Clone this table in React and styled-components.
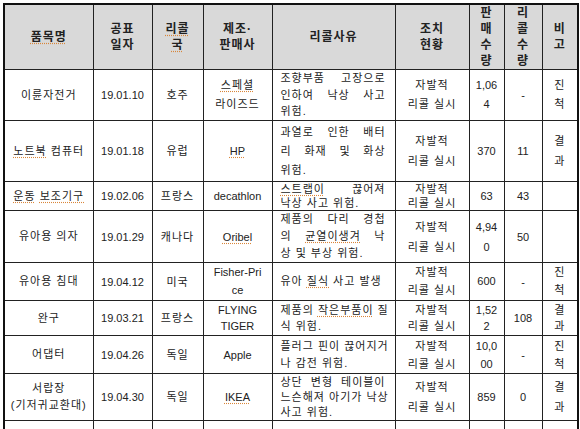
import React from "react";
import styled, { createGlobalStyle } from "styled-components";

const GlobalStyle = createGlobalStyle`
  html, body { margin: 0; padding: 0; background: #fff; }
  body { font-family: "Liberation Sans", "Noto Sans CJK KR", sans-serif; }
`;

const Page = styled.div`
  padding: 3px 0 0 3px;
  width: 580px;
  height: 429px;
  overflow: hidden;
  box-sizing: border-box;
`;

const Table = styled.table`
  border-collapse: collapse;
  table-layout: fixed;
  width: 574px;
  border: 2px solid #111;
  color: #222;
`;

const Head = styled.th`
  background: #d9d9d9;
  border: 1px solid #222;
  font-size: 12px;
  font-weight: bold;
  letter-spacing: 1px;
  line-height: 16px;
  text-align: center;
  padding: 0;
  height: 63px;
`;

const Cell = styled.td`
  border: 1px solid #222;
  font-size: 11px;
  letter-spacing: ${(p) => (p.$latin ? "0" : "1px")};
  line-height: ${(p) => p.$lh || 16}px;
  text-align: ${(p) => (p.$left ? "left" : "center")};
  padding: ${(p) => (p.$left ? "0 9px 0 8px" : "0")};
  height: ${(p) => p.$h}px;
  vertical-align: middle;
  white-space: nowrap;
  overflow: hidden;
`;

const Line = styled.span`
  display: block;
  text-align: ${(p) => (p.$full ? "justify" : "left")};
  text-align-last: ${(p) => (p.$full ? "justify" : "left")};
`;

const Mark = styled.span`
  text-decoration: underline dotted #d9863a;
  text-underline-offset: 2px;
`;

const cols = [89, 59, 51, 69, 123, 74, 35, 38, 36];

const split = (s) =>
  s.split("\n").map((t, i, a) => (
    <React.Fragment key={i}>
      {t}
      {i < a.length - 1 && <br />}
    </React.Fragment>
  ));

// h: row height, lh: line height of the reason text, lh2: line height of two-line cells
const rows = [
  {
    h: 50, lh: 16.5, lh2: 19,
    name: "이륜자전거", date: "19.01.10", nation: "호주",
    maker: <><Mark>스페셜</Mark><br />라이즈드</>, makerLatin: false,
    reason: [["조향부품 고장으로", 1], ["인하여 낙상 사고", 1], ["위험.", 0]],
    sold: "1,06\n4", recall: "-", note: "진\n척",
  },
  {
    h: 60, lh: 19, lh2: 20,
    name: <><Mark>노트북</Mark> 컴퓨터</>, date: "19.01.18", nation: "유럽",
    maker: <Mark>HP</Mark>, makerLatin: true,
    reason: [["과열로 인한 배터", 1], ["리 화재 및 화상", 1], ["위험.", 0]],
    sold: "370", recall: "11", note: "결\n과",
  },
  {
    h: 28, lh: 14, lh2: 14,
    name: <><Mark>운동</Mark> <Mark>보조기구</Mark></>, date: "19.02.06", nation: "프랑스",
    maker: "decathlon", makerLatin: true,
    reason: [[<><Mark>스트랩이</Mark> 끊어져</>, 1], ["낙상 사고 위험.", 0]],
    sold: "63", recall: "43", note: "",
  },
  {
    h: 51, lh: 17, lh2: 20,
    name: "유아용 의자", date: "19.01.29", nation: "캐나다",
    maker: <Mark>Oribel</Mark>, makerLatin: true,
    reason: [["제품의 다리 경첩", 1], [<>의 <Mark>균열이생겨</Mark> 낙</>, 1], ["상 및 부상 위험.", 0]],
    sold: "4,94\n0", recall: "50", note: "",
  },
  {
    h: 37, lh: 17, lh2: 17.5,
    name: "유아용 침대", date: "19.04.12", nation: "미국",
    maker: "Fisher-Pri\nce", makerLatin: true,
    reason: [[<>유아 <Mark>질식</Mark> 사고 발생</>, 0]],
    sold: "600", recall: "-", note: "진\n척",
  },
  {
    h: 34, lh: 16.5, lh2: 16.5,
    name: "완구", date: "19.03.21", nation: "프랑스",
    maker: "FLYING\nTIGER", makerLatin: true,
    reason: [[<>제품의 <Mark>작은부품이</Mark> 질</>, 1], ["식 위험.", 0]],
    sold: "1,52\n2", recall: "108", note: "결\n과",
  },
  {
    h: 37, lh: 17, lh2: 18,
    name: "어댑터", date: "19.04.26", nation: "독일",
    maker: "Apple", makerLatin: true,
    reason: [["플러그 핀이 끊어지거", 1], ["나 감전 위험.", 0]],
    sold: "10,0\n00", recall: "-", note: "진\n척",
  },
  {
    h: 46, lh: 15, lh2: 20,
    name: "서랍장\n(기저귀교환대)", date: "19.04.30", nation: "독일",
    maker: <Mark>IKEA</Mark>, makerLatin: true,
    reason: [["상단 변형 테이블이", 1], ["느슨해져 아기가 낙상", 1], ["사고 위험.", 0]],
    sold: "859", recall: "0", note: "결\n과",
  },
];

const text = (v) => (typeof v === "string" ? split(v) : v);

export default function App() {
  return (
    <Page>
      <GlobalStyle />
      <Table>
        <colgroup>
          {cols.map((w, i) => (
            <col key={i} style={{ width: w }} />
          ))}
        </colgroup>
        <thead>
          <tr>
            <Head><Mark>품목명</Mark></Head>
            <Head>공표<br />일자</Head>
            <Head><Mark>리콜</Mark><br /><Mark>국</Mark></Head>
            <Head>제조·<br />판매사</Head>
            <Head>리콜사유</Head>
            <Head>조치<br />현황</Head>
            <Head>판<br />매<br />수<br />량</Head>
            <Head>리<br />콜<br />수<br />량</Head>
            <Head>비<br />고</Head>
          </tr>
        </thead>
        <tbody>
          {rows.map((r, i) => (
            <tr key={i}>
              <Cell $h={r.h} $lh={Math.min(r.lh2, 17)}>{text(r.name)}</Cell>
              <Cell $h={r.h} $latin>{r.date}</Cell>
              <Cell $h={r.h}>{r.nation}</Cell>
              <Cell $h={r.h} $lh={r.lh2} $latin={r.makerLatin}>{text(r.maker)}</Cell>
              <Cell $h={r.h} $lh={r.lh} $left>
                {r.reason.map(([t, full], j) => (
                  <Line key={j} $full={!!full}>{t}</Line>
                ))}
              </Cell>
              <Cell $h={r.h} $lh={r.lh2}>자발적<br />리콜 실시</Cell>
              <Cell $h={r.h} $lh={r.lh2} $latin>{split(r.sold)}</Cell>
              <Cell $h={r.h} $latin>{r.recall}</Cell>
              <Cell $h={r.h} $lh={r.lh2}>{split(r.note)}</Cell>
            </tr>
          ))}
          <tr>
            {cols.map((_, i) => (
              <Cell key={i} $h={20}></Cell>
            ))}
          </tr>
        </tbody>
      </Table>
    </Page>
  );
}
